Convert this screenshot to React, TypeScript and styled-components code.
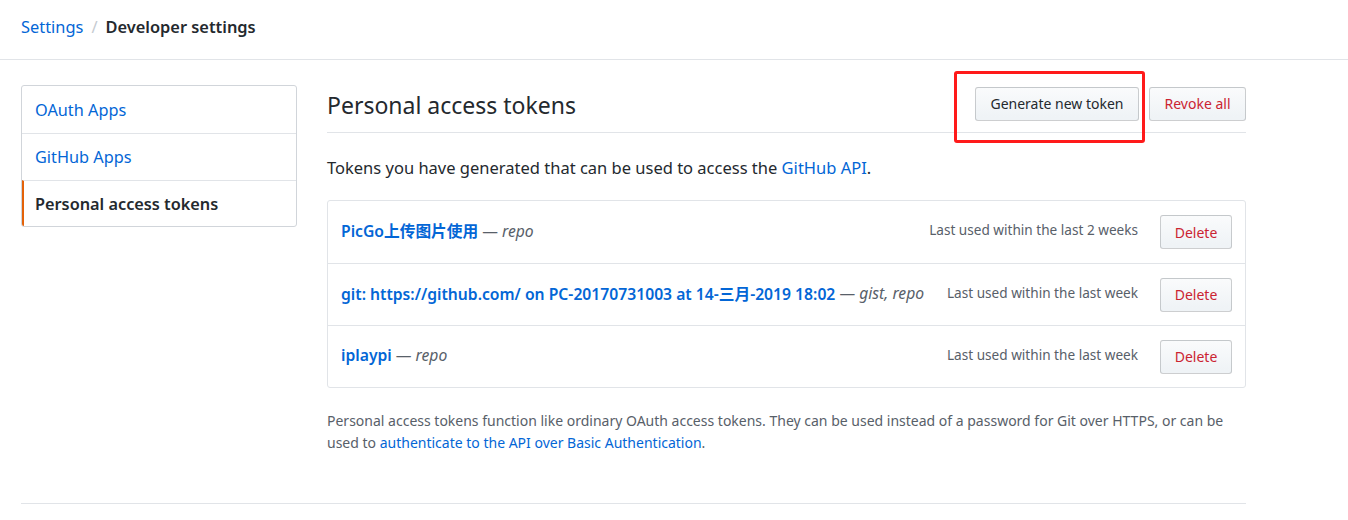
import React from "react";
import styled, { createGlobalStyle } from "styled-components";

const Global = createGlobalStyle`
  html, body { margin: 0; padding: 0; background: #fff; }
  body {
    font-family: "Noto Sans", "Noto Sans CJK SC", sans-serif;
    color: #24292e;
    -webkit-font-smoothing: antialiased;
  }
  * { box-sizing: border-box; }
  a { text-decoration: none; }
`;

const Header = styled.div`
  height: 60px;
  border-bottom: 1px solid #e1e4e8;
  display: flex;
  align-items: center;
  padding: 0 21px 6px;
  font-size: 16.4px;
`;

const Crumb = styled.a`
  color: #0366d6;
`;

const Sep = styled.span`
  color: #c6cbd1;
  margin: 0 8px;
`;

const Current = styled.span`
  font-weight: 600;
  color: #24292e;
`;

const Layout = styled.div`
  display: flex;
  gap: 30px;
  padding: 25px 0 0 21px;
  width: 1246px;
`;

const Menu = styled.nav`
  width: 276px;
  flex: none;
  align-self: flex-start;
  border: 1px solid #d1d5da;
  border-radius: 3px;
  overflow: hidden;
`;

const MenuItem = styled.a<{ $active?: boolean }>`
  display: flex;
  align-items: center;
  height: ${(p) => (p.$active ? "46px" : "47px")};
  padding-left: ${(p) => (p.$active ? "11px" : "13px")};
  font-size: 16.3px;
  color: ${(p) => (p.$active ? "#24292e" : "#0366d6")};
  font-weight: ${(p) => (p.$active ? 600 : 400)};
  border-left: ${(p) => (p.$active ? "2px solid #e36209" : "none")};
  & + & { border-top: 1px solid #e1e4e8; }
`;

const Main = styled.div`
  flex: 1;
  min-width: 0;
`;

const Subhead = styled.div`
  display: flex;
  align-items: center;
  height: 48px;
  border-bottom: 1px solid #e1e4e8;
`;

const Title = styled.h2`
  flex: 1;
  margin: -8px 0 0;
  font-size: 23px;
  font-weight: 400;
  color: #24292e;
`;

const Highlight = styled.div`
  position: relative;
  display: flex;
`;

const RedFrame = styled.div`
  position: absolute;
  left: -21px;
  top: -16px;
  width: 191px;
  height: 72px;
  border: 3px solid #ff1a1a;
  border-radius: 3px;
  pointer-events: none;
`;

const Btn = styled.button<{ $danger?: boolean }>`
  height: 34px;
  padding: 0 14.5px;
  font-family: inherit;
  font-size: 14px;
  color: ${(p) => (p.$danger ? "#cb2431" : "#24292e")};
  background: linear-gradient(-180deg, #fafbfc 0%, #eff3f6 90%);
  border: 1px solid rgba(27, 31, 35, 0.2);
  border-radius: 3px;
  cursor: pointer;
`;

const Actions = styled.div`
  display: flex;
  gap: 10px;
  margin-top: -10px;
`;

const Intro = styled.p`
  margin: 23px 0 21px;
  font-size: 16.5px;
  color: #24292e;
`;

const Blue = styled.a`
  color: #0366d6;
`;

const List = styled.div`
  border: 1px solid #e1e4e8;
  border-radius: 3px;
`;

const Row = styled.div`
  display: flex;
  align-items: center;
  height: 62px;
  padding: 0 13px 3px;
  & + & { border-top: 1px solid #e1e4e8; }
`;

const TokenName = styled.a`
  color: #0366d6;
  font-weight: 600;
  font-size: 15.7px;
`;

const Scope = styled.span`
  color: #586069;
  font-size: 15.7px;
  flex: 1;
  white-space: nowrap;
`;

const Em = styled.em`
  font-style: italic;
`;

const LastUsed = styled.span`
  color: #586069;
  font-size: 13.6px;
  margin: -2px 22px 0 0;
  white-space: nowrap;
`;

const DelBtn = styled(Btn)`
  padding: 0;
  width: 72px;
  margin-top: 3px;
`;

const Note = styled.p`
  margin: 22px 0 0;
  font-size: 14px;
  line-height: 22px;
  color: #586069;
`;

const Footer = styled.div`
  margin: 49px 0 0 21px;
  width: 1225px;
  border-top: 1px solid #e1e4e8;
  height: 16px;
`;

const tokens = [
  { name: "PicGo上传图片使用", scope: "repo", used: "Last used within the last 2 weeks" },
  {
    name: "git: https://github.com/ on PC-20170731003 at 14-三月-2019 18:02",
    scope: "gist, repo",
    used: "Last used within the last week",
  },
  { name: "iplaypi", scope: "repo", used: "Last used within the last week" },
];

export default function App() {
  return (
    <>
      <Global />
      <Header>
        <Crumb href="#">Settings</Crumb>
        <Sep>/</Sep>
        <Current>Developer settings</Current>
      </Header>
      <Layout>
        <Menu>
          <MenuItem href="#">OAuth Apps</MenuItem>
          <MenuItem href="#">GitHub Apps</MenuItem>
          <MenuItem href="#" $active>
            Personal access tokens
          </MenuItem>
        </Menu>
        <Main>
          <Subhead>
            <Title>Personal access tokens</Title>
            <Actions>
              <Highlight>
                <RedFrame />
                <Btn>Generate new token</Btn>
              </Highlight>
              <Btn $danger>Revoke all</Btn>
            </Actions>
          </Subhead>
          <Intro>
            Tokens you have generated that can be used to access the <Blue href="#">GitHub API</Blue>.
          </Intro>
          <List>
            {tokens.map((t) => (
              <Row key={t.name}>
                <TokenName href="#">{t.name}</TokenName>
                <Scope>
                  &nbsp;— <Em>{t.scope}</Em>
                </Scope>
                <LastUsed>{t.used}</LastUsed>
                <DelBtn $danger>Delete</DelBtn>
              </Row>
            ))}
          </List>
          <Note>
            {"Personal access tokens function like ordinary OAuth access tokens. They can be used instead of a password for Git over HTTPS, or can be"}
            <br />
            {"used to "}
            <Blue href="#">authenticate to the API over Basic Authentication</Blue>.
          </Note>
        </Main>
      </Layout>
      <Footer />
    </>
  );
}
